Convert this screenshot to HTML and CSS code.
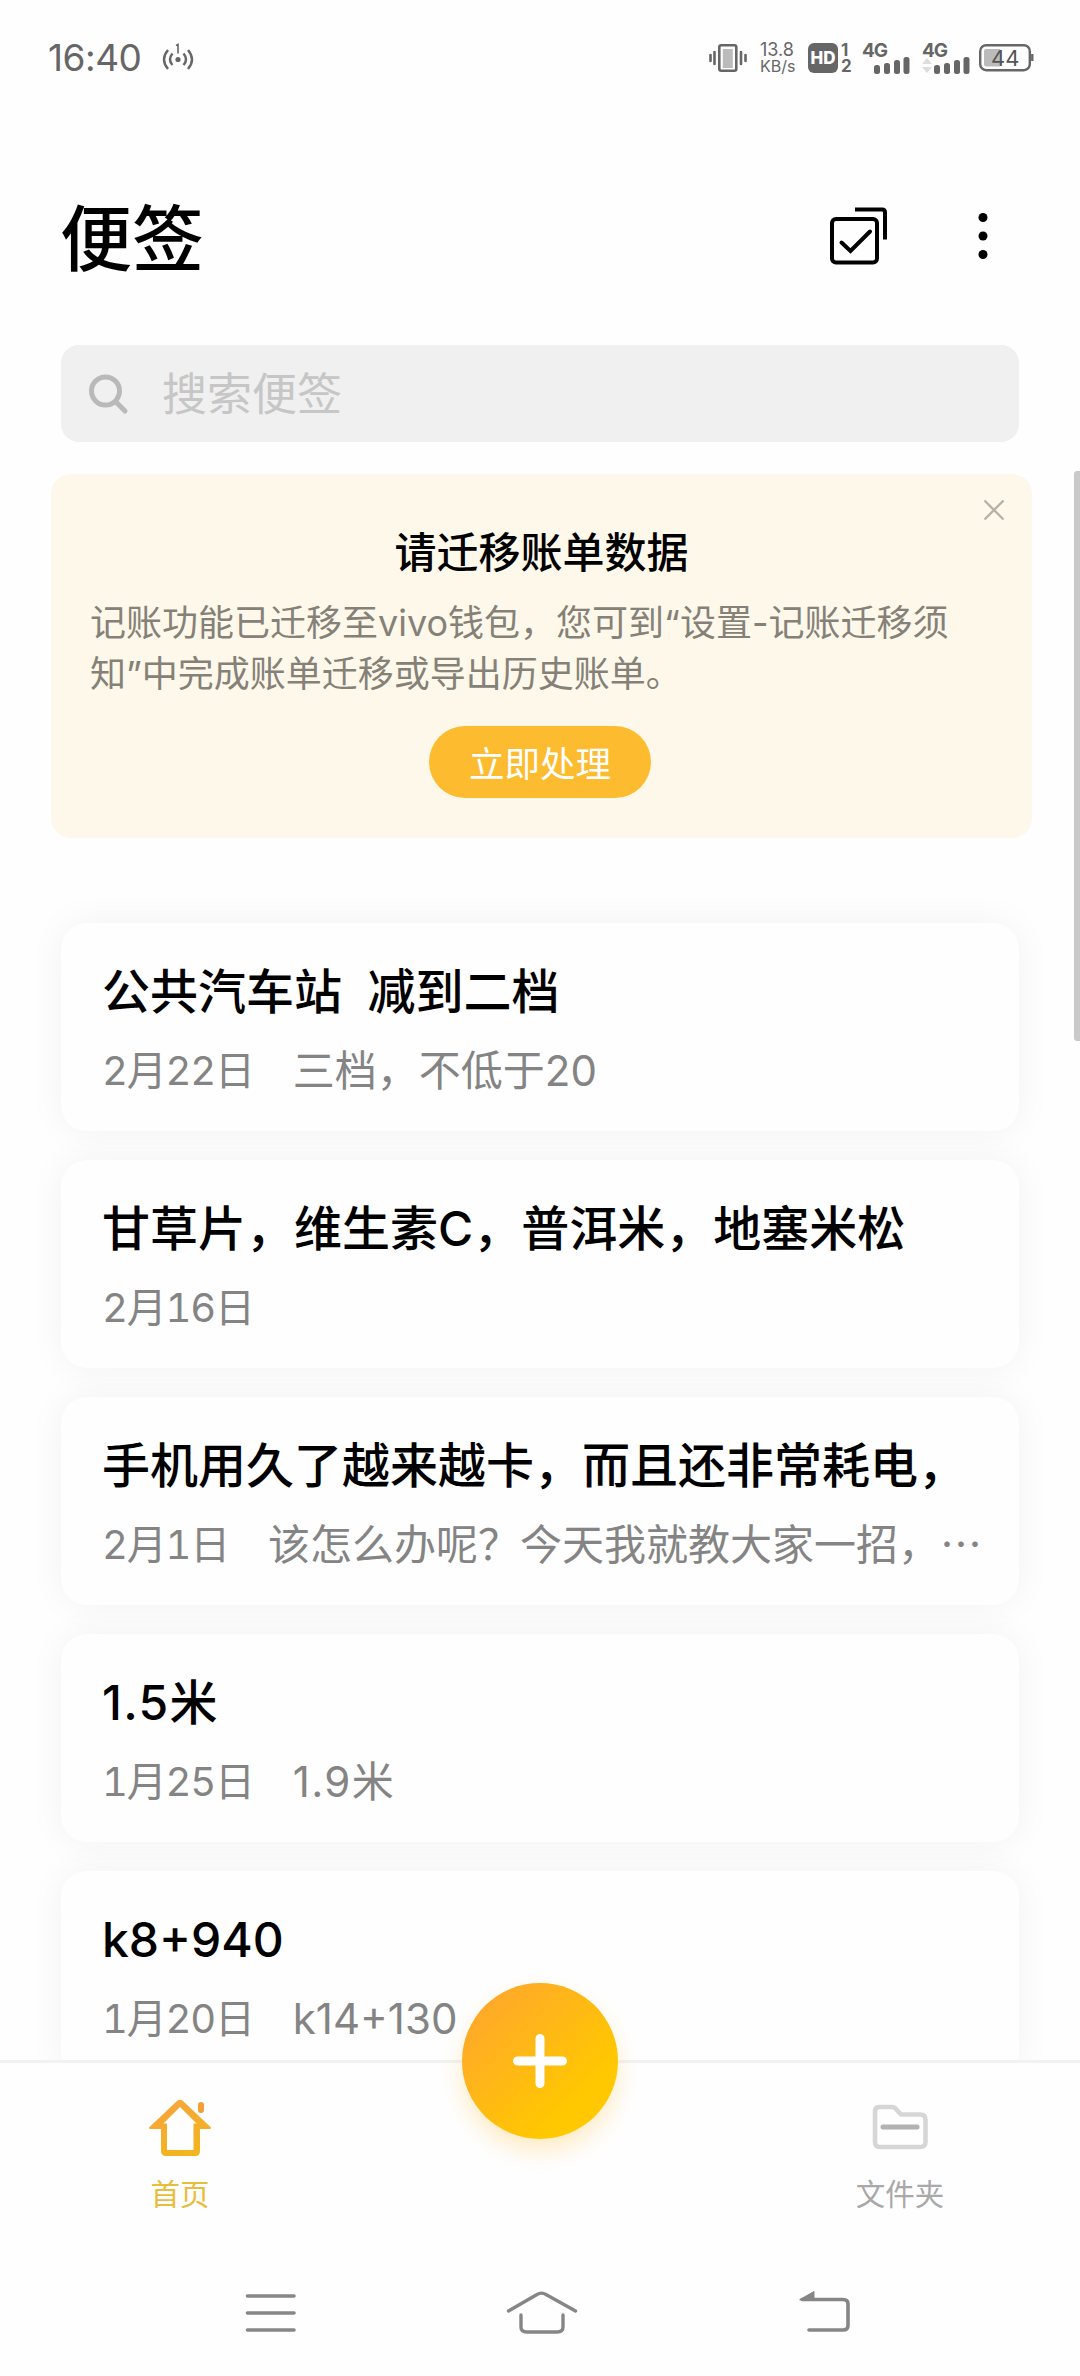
FILE: index.html
```html
<!DOCTYPE html>
<html lang="zh-CN">
<head>
    <meta charset="UTF-8" />
    <meta name="viewport" content="width=device-width, initial-scale=1.0"/>
    <title>便签</title>
    <link rel="stylesheet" href="styles.css">
</head>
<body>
<div class="status-bar">
    <span class="time">16:40</span>
    <svg class="hotspot" width="32" height="30" viewBox="0 0 32 30" fill="none" stroke="#666" stroke-width="2.4">
        <path d="M6 7 Q-2 16.500 6 26M10.500 10.500 Q5.500 16.500 10.500 22M21.500 10.500 Q26.500 16.500 21.500 22M26 7 Q34 16.500 26 26"/>
        <circle cx="16" cy="16.500" r="2.600" fill="#666" stroke="none"/>
        <path d="M14 2.500l2-1v9" stroke-width="1.600"/>
    </svg>
    <div class="status-icons">
        <svg class="vibrate" width="38" height="30" viewBox="0 0 38 30" fill="none" stroke="#666" stroke-width="2.6" stroke-linecap="round">
            <rect x="10.300" y="2.300" width="17" height="25.400" rx="2"/>
            <rect x="13.800" y="6" width="10" height="19" fill="#bbb" stroke="none"/>
            <path d="M1.500 12v6M5.500 9v12M32 9v12M36.500 12v6"/>
        </svg>
        <div class="speed"><span>13.8</span><span>KB/s</span></div>
        <div class="hd-badge">HD</div>
        <div class="sim"><span>1</span><span>2</span></div>
        <div class="signal">
            <span class="net">4G</span>
            <svg width="48" height="32" viewBox="0 0 48 32" fill="#666">
                <rect x="12" y="23" width="6" height="9" rx="2.500"/>
                <rect x="22" y="21" width="6" height="11" rx="2.500"/>
                <rect x="32" y="18" width="6" height="14" rx="2.500"/>
                <rect x="41.500" y="15" width="6" height="17" rx="2.500"/>
            </svg>
        </div>
        <div class="signal second">
            <span class="net">4G</span>
            <svg width="48" height="32" viewBox="0 0 48 32" fill="#666">
                <path d="M0 22l5-6 5 6zM0 25h10l-5 6z" fill="#ddd"/>
                <rect x="12" y="23" width="6" height="9" rx="2.500"/>
                <rect x="22" y="21" width="6" height="11" rx="2.500"/>
                <rect x="32" y="18" width="6" height="14" rx="2.500"/>
                <rect x="41.500" y="15" width="6" height="17" rx="2.500"/>
            </svg>
        </div>
        <svg class="battery" width="55" height="28" viewBox="0 0 55 28">
            <rect x="1.200" y="1.200" width="49.600" height="25" rx="6" fill="none" stroke="#666" stroke-width="2.400"/>
            <rect x="5" y="5" width="17" height="17.500" rx="2" fill="#bbb"/>
            <path d="M53.300 10v7" stroke="#666" stroke-width="2.400"/>
            <text class="level" x="12" y="21.500">44</text>
        </svg>
    </div>
</div>

<div class="header">
    <h1>便签</h1>
    <svg class="select-icon" width="58" height="58" viewBox="0 0 58 58" fill="none" stroke="#000" stroke-width="4">
        <rect x="2" y="12" width="45" height="43.500" rx="4"/>
        <path d="M11.500 35.500l9 8.500L40 24.500" stroke-linecap="round"/>
        <path d="M25 2.600h27q3 0 3 3v27" />
    </svg>
    <svg class="more-icon" width="10" height="48" viewBox="0 0 10 48">
        <circle cx="5" cy="5.500" r="4.500"/>
        <circle cx="5" cy="24" r="4.500"/>
        <circle cx="5" cy="42.500" r="4.500"/>
    </svg>
</div>

<div class="search">
    <svg width="42" height="42" viewBox="0 0 42 42" fill="none" stroke="#b9b9b9" stroke-width="5" stroke-linecap="round">
        <circle cx="18.500" cy="18" r="14"/>
        <path d="M29 29l9 9"/>
    </svg>
    <span>搜索便签</span>
</div>

<div class="content">
    <div class="notice">
        <svg class="close" width="22" height="22" viewBox="0 0 22 22" stroke="#b5b2a9" stroke-width="2.400">
            <path d="M1.500 1.500l19 19M20.500 1.500l-19 19"/>
        </svg>
        <h2>请迁移账单数据</h2>
        <p>记账功能已迁移至vivo钱包，您可到“设置-记账迁移须<br>知”中完成账单迁移或导出历史账单。</p>
        <button>立即处理</button>
    </div>

    <div class="notes">
        <div class="note">
            <h3>公共汽车站&nbsp; 减到二档</h3>
            <div class="meta"><span class="date">2月22日</span><span>三档，不低于20</span></div>
        </div>
        <div class="note">
            <h3>甘草片，维生素C，普洱米，地塞米松</h3>
            <div class="meta"><span class="date">2月16日</span></div>
        </div>
        <div class="note">
            <h3>手机用久了越来越卡，而且还非常耗电，</h3>
            <div class="meta"><span class="date">2月1日</span><span>该怎么办呢？今天我就教大家一招，<span class="dots">…</span></span></div>
        </div>
        <div class="note">
            <h3 class="spaced">1.5米</h3>
            <div class="meta"><span class="date">1月25日</span><span class="spaced">1.9米</span></div>
        </div>
        <div class="note">
            <h3>k8+940</h3>
            <div class="meta"><span class="date">1月20日</span><span>k14+130</span></div>
        </div>
    </div>
    <div class="scrollbar"></div>
</div>

<div class="tab-bar">
    <div class="tab active">
        <svg width="62" height="60" viewBox="0 0 62 60" fill="none">
            <defs>
                <linearGradient id="home-color" x1="0" y1="0" x2="0.500" y2="1">
                    <stop offset="0" stop-color="#f7a440"/>
                    <stop offset="1" stop-color="#f2b41f"/>
                </linearGradient>
            </defs>
            <path fill="url(#home-color)" fill-rule="evenodd" d="M28 2q3-2.500 6 0L62 28.500q0 1.500-1.500 1.500H51V52q0 5-5 5H17q-5 0-5-5V30H1.500Q0 30 0 28.500zM31 8L14.500 24.500H18V51H44.500V24.500H47.500z"/>
            <rect x="49" y="3" width="6" height="11" rx="3" fill="#f2a035"/>
        </svg>
        <span>首页</span>
    </div>
    <button class="add">
        <svg width="54" height="54" viewBox="0 0 54 54" stroke="#fff" stroke-width="9" stroke-linecap="round">
            <path d="M27 4.500v45M4.500 27h45"/>
        </svg>
    </button>
    <div class="tab">
        <svg width="56" height="60" viewBox="0 0 56 60" fill="none" stroke="#d6d6d6" stroke-width="4.600" stroke-linejoin="round">
            <path d="M7 8H20q2 0 3.500 1.500L29 15.500H48q5.500 0 5.500 5V43q0 5-5 5H8q-5 0-5-5V13q0-5 4-5z"/>
            <path d="M11 28h34" stroke="#b2b2b2" stroke-width="5" stroke-linecap="round"/>
        </svg>
        <span>文件夹</span>
    </div>
</div>

<div class="system-nav">
    <svg width="52" height="46" viewBox="0 0 52 46" fill="none" stroke="#868686" stroke-width="3.600" stroke-linecap="round">
        <path d="M2.500 6h46.500M2.500 23h46.500M2.500 40h46.500"/>
    </svg>
    <svg class="nav-home" width="72" height="46" viewBox="0 0 72 46" fill="none" stroke="#868686" stroke-width="3.400" stroke-linecap="round">
        <path d="M2.500 21L31 4.500q4.500-2.800 9 0L69.500 21M15 25v12q0 5 6 5H51q6 0 6-5V25"/>
    </svg>
    <svg width="52" height="46" viewBox="0 0 52 46" fill="none" stroke="#868686" stroke-width="3.600" stroke-linecap="round">
        <path d="M3 9.500H44q5 0 5 4.500V35.500q0 4.500-5 4.500H10"/>
        <path d="M1 9.500L15 1.500v8z" fill="#868686" stroke-width="1"/>
    </svg>
</div>
</body>
</html>
```

FILE: styles.css
```css
* {
    box-sizing: border-box;
}

body {
    margin: 0;
    height: 2376px;
    display: flex;
    flex-direction: column;
    overflow: hidden;
    background: #fefefe;
    color: #000;
    font-family: Inter, "Noto Sans CJK SC", sans-serif;
}

h1, h2, h3, p {
    margin: 0;
}

svg {
    display: block;
    flex-shrink: 0;
}

button {
    border: none;
    padding: 0;
    font-family: inherit;
}

.status-bar {
    height: 116px;
    flex-shrink: 0;
    display: flex;
    align-items: center;
    padding: 0 46px 0 48px;
    color: #666;
}

.time {
    font-size: 37px;
    line-height: 40px;
    width: 114px;
    letter-spacing: -0.5px;
    white-space: nowrap;
}

.status-icons {
    display: flex;
    align-items: center;
    margin-left: auto;
}

.speed {
    display: flex;
    flex-direction: column;
    width: 38px;
    margin-left: 13px;
    font-size: 18px;
    line-height: 17px;
}

.speed span:last-child {
    font-size: 16px;
}

.hd-badge {
    width: 30px;
    height: 30px;
    margin-left: 10px;
    border-radius: 6px;
    background: #666;
    color: #fff;
    font-size: 17px;
    font-weight: 800;
    line-height: 30px;
    text-align: center;
}

.sim {
    display: flex;
    flex-direction: column;
    width: 12px;
    margin-left: 3px;
    font-size: 17px;
    font-weight: 700;
    line-height: 16px;
}

.signal {
    position: relative;
    margin-left: 9px;
}

.second {
    margin-left: 12px;
}

.net {
    position: absolute;
    top: -3px;
    left: 0;
    font-size: 19px;
    font-weight: 700;
    line-height: 24px;
    letter-spacing: -1px;
}

.battery {
    margin-left: 9px;
}

.level {
    font-size: 22px;
    fill: #555;
}

.header {
    height: 229px;
    flex-shrink: 0;
    display: flex;
    align-items: center;
    padding: 10px 92px 0 60px;
}

.header h1 {
    font-size: 72px;
    font-weight: 500;
    line-height: 90px;
    margin: 7px auto 0 0;
}

.select-icon {
    margin-right: 90px;
}

.search {
    height: 97px;
    flex-shrink: 0;
    display: flex;
    align-items: center;
    gap: 33px;
    margin: 0 61px;
    padding: 0 26px;
    border-radius: 18px;
    background: #f0f0f0;
    color: #c6c6c6;
    font-size: 45px;
    line-height: 60px;
}

.search span {
    padding-top: 3px;
}

.content {
    position: relative;
    height: 1618px;
    flex-shrink: 0;
    overflow: hidden;
    padding: 32px 0 0;
}

.notice {
    position: relative;
    height: 364px;
    margin: 0 48px 0 51px;
    padding: 52px 39px 0;
    display: flex;
    flex-direction: column;
    border-radius: 20px;
    background: #fdf8e9;
}

.close {
    position: absolute;
    top: 25px;
    right: 27px;
}

.notice h2 {
    font-size: 42px;
    font-weight: 500;
    line-height: 54px;
    text-align: center;
}

.notice p {
    margin-top: 18px;
    color: #858178;
    font-size: 36px;
    line-height: 51px;
    white-space: nowrap;
}

.notice button {
    align-self: center;
    width: 222px;
    height: 72px;
    margin: 26px 3px 0 0;
    padding-bottom: 2px;
    border-radius: 36px;
    background: #fdbc30;
    color: #fff;
    font-size: 35.500px;
}

.notes {
    display: flex;
    flex-direction: column;
    gap: 29px;
    margin: 85px 61px 0;
}

.note {
    height: 208px;
    flex-shrink: 0;
    padding: 37px 41px 0;
    border-radius: 26px;
    background: #fefefe;
    box-shadow: 0 0 36px rgba(40, 40, 60, 0.05);
    white-space: nowrap;
}

.note h3 {
    font-size: 48px;
    font-weight: 500;
    line-height: 64px;
}

.note .spaced {
    letter-spacing: 1.3px;
}

.meta {
    display: flex;
    gap: 39px;
    margin-top: 18px;
    color: #848484;
    font-size: 42px;
    line-height: 58px;
}

.date {
    font-size: 40px;
    font-variant-numeric: tabular-nums;
    letter-spacing: -1.2px;
}

.dots {
    font-family: "Noto Sans CJK SC", sans-serif;
    line-height: 1;
}

.scrollbar {
    position: absolute;
    top: 29px;
    right: 0;
    width: 6px;
    height: 570px;
    border-radius: 3px 0 0 3px;
    background: #c9c9c9;
}

.tab-bar {
    position: relative;
    height: 178px;
    flex-shrink: 0;
    display: flex;
    justify-content: space-between;
    padding: 36px 80px 0;
    border-top: 3px solid #f2f2f2;
    background: #fefefe;
}

.tab {
    width: 200px;
    display: flex;
    flex-direction: column;
    align-items: center;
    gap: 15px;
    color: #a9a9a9;
    font-size: 29.500px;
    line-height: 40px;
}

.active {
    color: #e8bd3c;
}

.add {
    position: absolute;
    top: -80px;
    left: 462px;
    width: 156px;
    height: 156px;
    display: flex;
    align-items: center;
    justify-content: center;
    border-radius: 50%;
    background: linear-gradient(135deg, #ffaa28 15%, #ffc800 75%);
    box-shadow: 0 12px 22px rgba(255, 185, 50, 0.28);
}

.system-nav {
    display: flex;
    justify-content: space-between;
    padding: 52px 229px 0 245px;
}

.nav-home {
    margin-right: 12px;
}
```
